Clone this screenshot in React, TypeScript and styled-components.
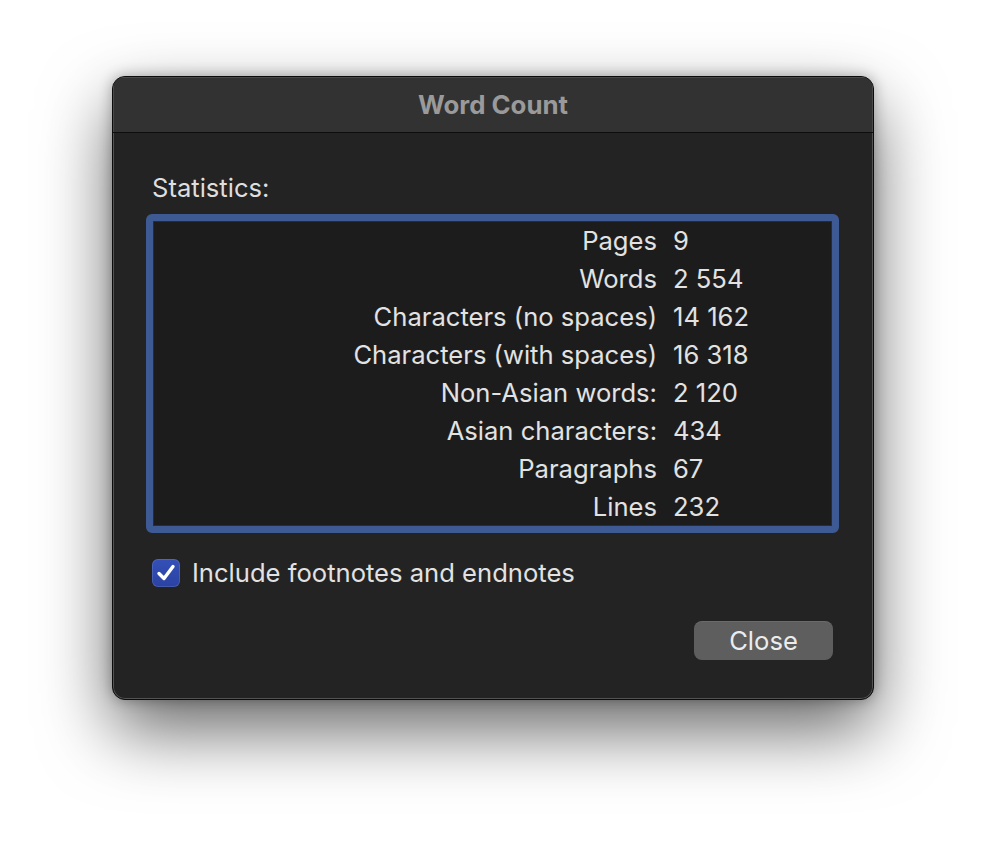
import React from "react";
import styled, { createGlobalStyle } from "styled-components";

const GlobalStyle = createGlobalStyle`
  html, body {
    margin: 0;
    padding: 0;
    background: #ffffff;
  }
  body {
    font-family: Inter, "Liberation Sans", sans-serif;
    -webkit-font-smoothing: antialiased;
  }
`;

const stats = [
  { label: "Pages", value: "9" },
  { label: "Words", value: "2 554" },
  { label: "Characters (no spaces)", value: "14 162" },
  { label: "Characters (with spaces)", value: "16 318" },
  { label: "Non-Asian words:", value: "2 120" },
  { label: "Asian characters:", value: "434" },
  { label: "Paragraphs", value: "67" },
  { label: "Lines", value: "232" },
];

const App = () => {
  return (
    <>
      <GlobalStyle />
      <Page>
        <Dialog>
          <TitleBar>Word Count</TitleBar>
          <Body>
            <SectionLabel>Statistics:</SectionLabel>
            <StatsBox>
              {stats.map((s) => (
                <React.Fragment key={s.label}>
                  <StatLabel>{s.label}</StatLabel>
                  <StatValue>{s.value}</StatValue>
                </React.Fragment>
              ))}
            </StatsBox>
            <CheckRow>
              <CheckBox>
                <svg width="22" height="22" viewBox="0 0 22 22">
                  <path
                    d="M4 11.5 L9 16.5 L18 4.5"
                    fill="none"
                    stroke="#ffffff"
                    strokeWidth="3.4"
                    strokeLinecap="round"
                    strokeLinejoin="round"
                  />
                </svg>
              </CheckBox>
              <CheckLabel>Include footnotes and endnotes</CheckLabel>
            </CheckRow>
            <Footer>
              <Button>Close</Button>
            </Footer>
          </Body>
        </Dialog>
      </Page>
    </>
  );
};

export default App;

const Page = styled.div`
  width: 986px;
  height: 848px;
  padding: 76px 0 0 112px;
  box-sizing: border-box;
  background: #ffffff;
`;

const Dialog = styled.div`
  width: 762px;
  height: 624px;
  box-sizing: border-box;
  background: #232323;
  border: 1px solid #0c0c0c;
  border-radius: 13px;
  box-shadow: inset 0 0 0 1px rgba(255, 255, 255, 0.22),
    0 30px 70px rgba(0, 0, 0, 0.6), 0 0 14px rgba(0, 0, 0, 0.3);
  overflow: hidden;
  display: flex;
  flex-direction: column;
`;

const TitleBar = styled.div`
  height: 56px;
  flex-shrink: 0;
  box-sizing: border-box;
  background: #323232;
  border-bottom: 1px solid #0e0e0e;
  display: flex;
  align-items: center;
  justify-content: center;
  font-size: 25.8px;
  font-weight: 700;
  color: #9a9a9a;
  box-shadow: inset 1px 1px 0 rgba(255, 255, 255, 0.12),
    inset -1px 0 0 rgba(255, 255, 255, 0.12);
`;

const Body = styled.div`
  flex: 1;
  display: flex;
  flex-direction: column;
  padding: 42px 34px 0 33px;
`;

const SectionLabel = styled.div`
  font-size: 25.6px;
  line-height: 26px;
  color: #dedede;
  padding-left: 6px;
  margin-bottom: 13px;
`;

const StatsBox = styled.div`
  display: grid;
  grid-template-columns: 504px 1fr;
  column-gap: 16px;
  grid-auto-rows: 38px;
  background: #1c1c1c;
  border: 7px solid #3d5a94;
  border-radius: 6px;
  box-shadow: inset 0 0 0 1px #2c2c2c;
  height: 319px;
  box-sizing: border-box;
  padding: 1px 0 0;
`;

const StatLabel = styled.div`
  text-align: right;
  font-size: 25.6px;
  line-height: 38px;
  color: #e2e2e2;
  white-space: nowrap;
`;

const StatValue = styled.div`
  font-size: 25.6px;
  line-height: 38px;
  color: #e2e2e2;
  white-space: nowrap;
`;

const CheckRow = styled.div`
  display: flex;
  align-items: center;
  gap: 12px;
  margin-top: 25px;
  padding-left: 6px;
  height: 30px;
`;

const CheckBox = styled.div`
  width: 28px;
  height: 28px;
  box-sizing: border-box;
  border-radius: 6px;
  background: linear-gradient(#3450b8, #2a42a2);
  box-shadow: inset 0 0 0 1px rgba(255, 255, 255, 0.12);
  display: flex;
  align-items: center;
  justify-content: center;
`;

const CheckLabel = styled.div`
  font-size: 25.6px;
  line-height: 30px;
  color: #e2e2e2;
`;

const Footer = styled.div`
  display: flex;
  justify-content: flex-end;
  margin-top: 33px;
  padding-right: 6px;
`;

const Button = styled.button`
  width: 139px;
  height: 39px;
  border: none;
  border-radius: 8px;
  background: #5e5e5e;
  color: #ececec;
  font-family: Inter, "Liberation Sans", sans-serif;
  font-size: 25.6px;
  padding: 0;
  box-shadow: inset 0 1px 0 rgba(255, 255, 255, 0.08);
  cursor: pointer;
`;
